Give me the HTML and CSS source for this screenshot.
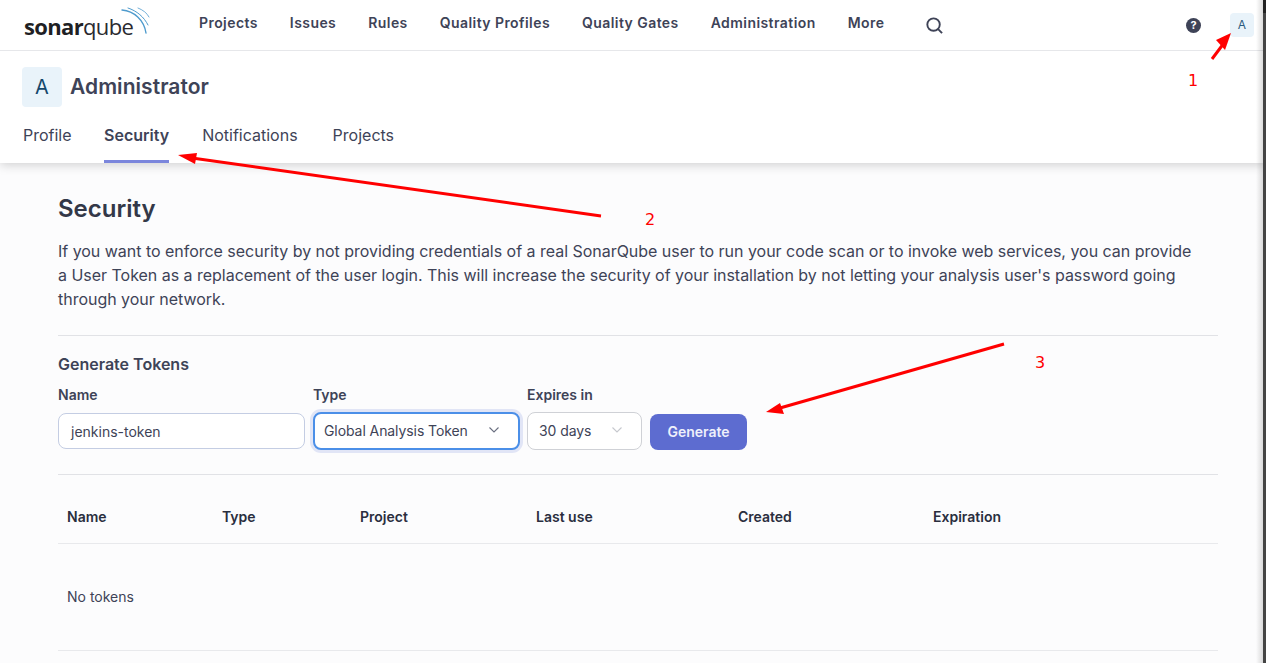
FILE: index.html
```html
<!DOCTYPE html>
<html lang="en">
<head>
  <meta charset="UTF-8">
  <title>Security - SonarQube</title>
  <link rel="stylesheet" href="styles.css">
</head>
<body>
  <div class="page">
    <header class="top">
      <nav class="nav">
        <a class="logo">
          <span class="logo-sonar">sonar</span><span class="logo-qube">qube</span>
          <svg class="logo-waves" width="30" height="30" viewBox="0 0 30 30" fill="none" stroke="#4e9bcd" stroke-linecap="round">
            <path d="M2 4C14 5 24 14 26 27" stroke-width="1.4"/>
            <path d="M8 2C17 5 24 11 28 19" stroke-width="1"/>
            <path d="M18 2C23 4 27 7 29 11" stroke-width="0.8"/>
          </svg>
        </a>
        <ul class="nav-links">
          <li>Projects</li>
          <li>Issues</li>
          <li>Rules</li>
          <li>Quality Profiles</li>
          <li>Quality Gates</li>
          <li>Administration</li>
          <li>More</li>
        </ul>
        <svg class="search-icon" width="17" height="17" viewBox="0 0 18 18" fill="none" stroke="#3e4357" stroke-width="2">
          <circle cx="8" cy="8" r="6.6"/>
          <path d="M12.8 12.8L17 17"/>
        </svg>
        <span class="help-icon">?</span>
        <span class="avatar-small">A</span>
      </nav>
      <div class="user-row">
        <span class="avatar">A</span>
        <h1>Administrator</h1>
      </div>
      <ul class="tabs">
        <li class="tab-profile">Profile</li>
        <li class="active">Security</li>
        <li>Notifications</li>
        <li class="tab-projects">Projects</li>
      </ul>
    </header>

    <main class="content">
      <h2>Security</h2>
      <p class="intro">If you want to enforce security by not providing credentials of a real SonarQube user to run your code scan or to invoke web services, you can provide a User Token as a replacement of the user login. This will increase the security of your installation by not letting your analysis user's password going through your network.</p>

      <section class="generate">
        <h3>Generate Tokens</h3>
        <form class="token-form">
          <div class="field field-name">
            <label>Name</label>
            <div class="input">jenkins-token</div>
          </div>
          <div class="field field-type">
            <label>Type</label>
            <div class="select focused">Global Analysis Token
              <svg width="10" height="6" viewBox="0 0 10 6" fill="none" stroke="#6a6f80" stroke-width="1.1"><path d="M0.5 0.5L5 5L9.5 0.5"/></svg>
            </div>
          </div>
          <div class="field field-expires">
            <label>Expires in</label>
            <div class="select">30 days
              <svg width="10" height="6" viewBox="0 0 10 6" fill="none" stroke="#c6c8ce" stroke-width="1.1"><path d="M0.5 0.5L5 5L9.5 0.5"/></svg>
            </div>
          </div>
          <button type="button" class="generate-btn">Generate</button>
        </form>
      </section>

      <table class="tokens">
        <thead>
          <tr>
            <th class="col-name">Name</th>
            <th class="col-type">Type</th>
            <th class="col-project">Project</th>
            <th class="col-use">Last use</th>
            <th class="col-created">Created</th>
            <th class="col-exp">Expiration</th>
            <th></th>
          </tr>
        </thead>
        <tbody>
          <tr>
            <td colspan="7">No tokens</td>
          </tr>
        </tbody>
      </table>
    </main>
  </div>

  <!-- red annotations drawn on top of the screenshot -->
  <svg class="marks" width="1266" height="663" viewBox="0 0 1266 663">
    <g stroke="#f00" stroke-width="3" fill="none">
      <path d="M1212 59L1224 43" />
      <path d="M601 216L192 158" />
      <path d="M1004 344L780 408" />
    </g>
    <g fill="#f00">
      <path d="M1231 33L1225 50L1216 40Z"/>
      <path d="M178 155L197 153L195 164Z"/>
      <path d="M766 412L780 403L784 414Z"/>
    </g>
  </svg>
  <span class="mark-num num-1">1</span>
  <span class="mark-num num-2">2</span>
  <span class="mark-num num-3">3</span>
  <div class="edge"></div>
</body>
</html>
```

FILE: styles.css
```css
* { box-sizing: border-box; }
html, body { margin: 0; height: 100%; overflow: hidden; }
body { font-family: Inter, "Liberation Sans", sans-serif; color: #3e4357; background: #fcfcfd; }
ul { list-style: none; margin: 0; padding: 0; }

.page { height: 663px; display: flex; flex-direction: column; }

/* top white block */
.top { height: 163px; background: #fff; box-shadow: 0 2px 10px rgba(0, 0, 0, 0.18); position: relative; }
.nav { height: 51px; border-bottom: 1px solid #e6e7ea; display: flex; align-items: center; padding: 0 12px 0 24px; }
.logo { width: 175px; position: relative; display: block; font-size: 22px; line-height: 27px; color: #1f1f24; font-family: "Open Sans", sans-serif; letter-spacing: -0.65px; padding-top: 3px; }
.logo-sonar { font-weight: 700; }
.logo-qube { font-weight: 400; color: #2a2a30; }
.logo-waves { position: absolute; left: 96px; top: -4px; }
.nav-links { display: flex; gap: 32px; font-size: 14px; font-weight: 600; line-height: 20px; letter-spacing: 0.43px; margin-top: -5px; }
.search-icon { margin-left: 42px; }
.help-icon { width: 15px; height: 15px; border-radius: 50%; background: #3e4357; color: #fff; font-size: 11px; font-weight: 700; line-height: 15px; text-align: center; margin-left: auto; }
.avatar-small { width: 24px; height: 24px; margin-left: 29px; margin-top: -1px; border-radius: 4px; background: #e9f3fa; color: #2b5a7e; font-size: 12px; line-height: 24px; text-align: center; }

.user-row { display: flex; align-items: center; gap: 8px; padding: 16px 0 0 22px; }
.avatar { width: 40px; height: 40px; border-radius: 4px; background: #e9f3fa; color: #14476b; font-size: 20px; line-height: 40px; text-align: center; }
h1 { margin: 0; font-size: 21px; line-height: 28px; font-weight: 600; letter-spacing: 0.05px; }
.tabs { display: flex; gap: 33px; padding: 0 0 0 23px; margin-top: 16px; font-size: 16px; line-height: 24px; }
.tabs li { height: 40px; }
.tabs .tab-profile { margin-right: -0.5px; }
.tabs .tab-projects { margin-left: 2px; }
.tabs .active { font-weight: 600; border-bottom: 3px solid #7b86dc; height: 40px; }

/* main column */
.content { flex: 1; padding: 0 48px 0 58px; }
h2 { margin: 31px 0 0; font-size: 24px; line-height: 30px; font-weight: 600; color: #333848; }
.intro { margin: 15px 0 0; font-size: 16px; line-height: 24px; letter-spacing: -0.025px; padding: 0 20px 24px 0; border-bottom: 1px solid #e1e2e6; }

.generate { padding: 18px 0 24px; border-bottom: 1px solid #e1e2e6; }
h3 { margin: 0; font-size: 16px; line-height: 20px; font-weight: 600; }
.token-form { display: flex; align-items: flex-end; margin-top: 11px; }
.field label { display: block; font-size: 14px; line-height: 20px; font-weight: 600; }
.input, .select { font-size: 14px; color: #3e4357; background: #fff; border-radius: 8px; }
.field-name { width: 247px; margin-right: 8px; }
.field-name .input { height: 36px; margin-top: 8px; margin-bottom: 1px; border: 1px solid #c4cde3; line-height: 36px; padding-left: 12px; }
.field-type { width: 207px; margin-right: 7px; }
.field-expires { width: 115px; margin-right: 8px; }
.field-type label { margin-bottom: 7px; }
.field-expires label { margin-bottom: 7px; }
.select { height: 38px; border: 1px solid #cfd1d6; display: flex; align-items: center; justify-content: space-between; padding: 0 19px 2px 11px; letter-spacing: -0.08px; }
.select.focused { border: 2px solid #4b8fe8; box-shadow: 0 0 0 3px #e1e5f6; padding-left: 9px; padding-right: 19px; }
.generate-btn { width: 97px; height: 36px; padding: 0 0 2px; border: 0; border-radius: 8px; background: #5d6cd0; color: #eef0fb; font: 600 14px Inter, sans-serif; }

.tokens { width: 1160px; border-collapse: collapse; table-layout: fixed; font-size: 14px; color: #2a2e3e; border-bottom: 1px solid #e8e9ec; }
.tokens th { height: 68px; padding: 16px 0 0 9px; text-align: left; font-weight: 600; border-bottom: 1px solid #e8e9ec; }
.col-name { width: 155px; }
.col-type { width: 138px; }
.col-project { width: 176px; }
.col-use { width: 202px; }
.col-created { width: 195px; }
.col-exp { width: 233px; }
.tokens td { height: 107px; padding: 0 0 0 9px; color: #3e4357; }

/* annotations */
.marks { position: absolute; left: 0; top: 0; pointer-events: none; }
.mark-num { position: absolute; color: #f00; font: 16px "DejaVu Sans", sans-serif; line-height: 20px; }
.num-1 { left: 1188px; top: 71px; }
.num-2 { left: 645px; top: 210px; }
.num-3 { left: 1035px; top: 353px; }

/* dark strip of the next window at the right edge */
.edge { position: absolute; right: 0; top: 0; width: 10px; height: 663px; background: linear-gradient(to right, rgba(0, 0, 0, 0) 0, rgba(0, 0, 0, 0.14) 70%, #444 70%); }
.edge::after { content: ""; position: absolute; right: 0; top: 0; width: 3px; height: 13px; background: #222; }
```
